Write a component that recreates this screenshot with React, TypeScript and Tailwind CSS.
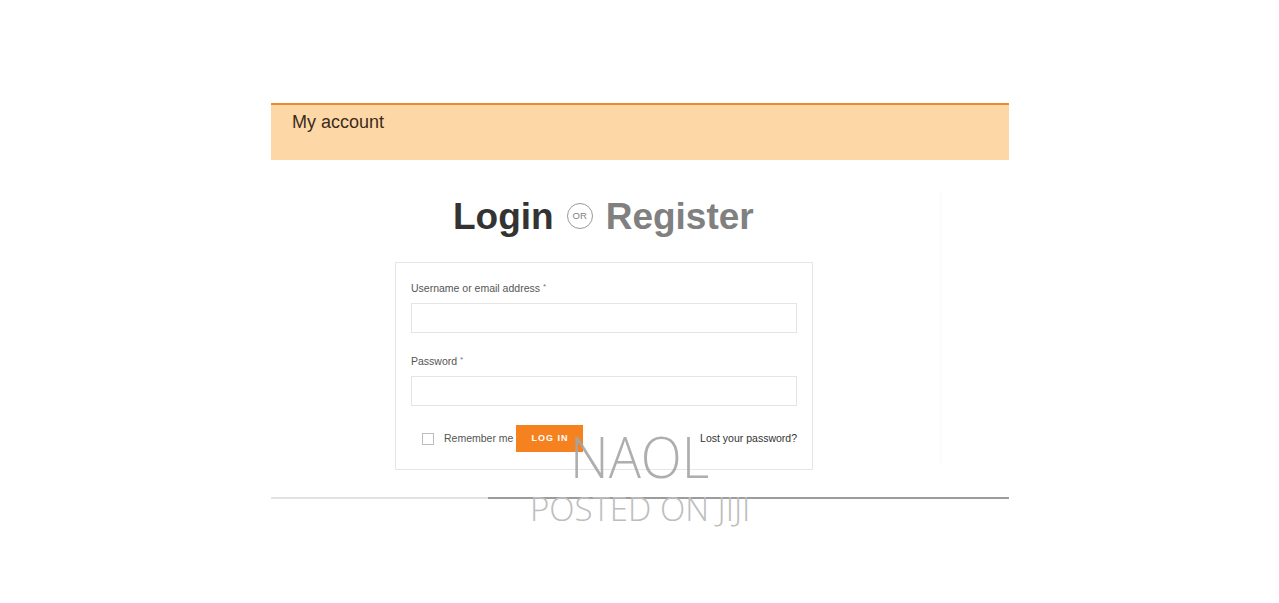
import React from "react";

const sans = { fontFamily: '"Liberation Sans", Arial, sans-serif' };

const Field: React.FC<{ label: string; type?: string }> = ({ label, type = "text" }) => {
  return (
    <div>
      <label className="block text-[10.5px] leading-[14px] text-[#555]">
        {label} <span className="relative top-[-3px] text-[8px] leading-none text-[#777]">*</span>
      </label>
      <input
        type={type}
        className="mt-[8px] block h-[30px] w-full border border-[#e4e4e4] bg-white outline-none"
      />
    </div>
  );
};

const App: React.FC = () => {
  return (
    <div className="relative h-[603px] w-full overflow-hidden bg-white" style={sans}>
      <div className="ml-[271px] w-[738px] pt-[103px]">
        <div className="h-[57px] border-t-2 border-[#ef8a2c] bg-[#fdd8a6] pl-[21px] pt-[4px] text-[18px] leading-[27px] text-[#3b2b1c]">
          My account
        </div>

        <div className="flex">
          <div className="w-[669px]">
            <div className="mt-[38px] flex h-[36px] items-center pl-[182px] text-[37px] font-bold leading-none">
              <span className="text-[#333]">Login</span>
              <span className="ml-[13px] mr-[13px] flex h-[26px] w-[26px] items-center justify-center rounded-full border-[1.5px] border-[#9a9a9a] text-[9.5px] font-normal text-[#808080]">
                OR
              </span>
              <span className="text-[#808080]">Register</span>
            </div>

            <div className="ml-[124px] mt-[28px] w-[418px] border border-[#e6e6e6] px-[15px] pb-[17px] pt-[18px]">
              <Field label="Username or email address" />
              <div className="mt-[21px]">
                <Field label="Password" type="password" />
              </div>
              <div className="mt-[19px] flex h-[27px] items-center">
                <span className="ml-[11px] h-[12px] w-[12px] border border-[#bdbdbd]" />
                <span className="ml-[10px] text-[10.5px] text-[#555]">Remember me</span>
                <button className="ml-[3px] h-[27px] w-[67px] bg-[#f5821f] text-[9px] font-bold tracking-[1px] text-white">
                  LOG IN
                </button>
                <a className="ml-auto text-[10.5px] text-[#333]">Lost your password?</a>
              </div>
            </div>
          </div>
          <div className="mt-[32px] h-[271px] w-[2px] bg-[#fbfbfb]" />
        </div>

        <div className="mt-[27px] flex h-[2px]">
          <div className="w-[217px] bg-[#e2e2e2]" />
          <div className="flex-1 bg-[#9c9c9c]" />
        </div>
      </div>

      <div
        className="absolute left-[570px] top-[428px] origin-left scale-x-[0.94] text-[57px] font-light leading-none text-[#a6a6a6] opacity-90"
        style={{ fontFamily: '"Open Sans", sans-serif' }}
      >
        NAOL
      </div>
      <div
        className="absolute left-[530px] top-[492px] text-[33px] font-light leading-none text-[#bdbdbd]"
        style={{ fontFamily: '"Open Sans", sans-serif' }}
      >
        POSTED ON JIJI
      </div>
    </div>
  );
};

export default App;
